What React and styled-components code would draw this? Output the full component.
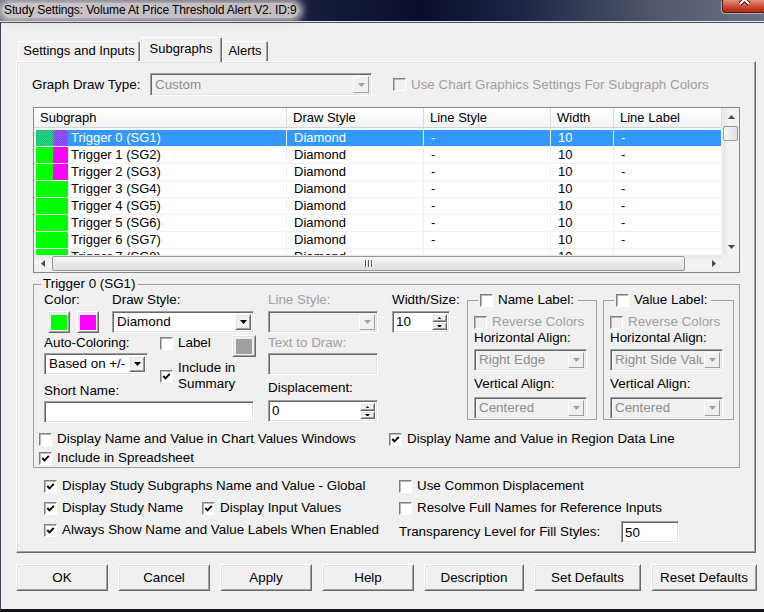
import React from "react";
import styled, { createGlobalStyle, css } from "styled-components";

const GlobalStyle = createGlobalStyle`
  html, body { margin: 0; padding: 0; background: #f0f0f0; }
  body {
    font-family: "Liberation Sans", Arial, sans-serif;
    font-size: 13.4px;
    color: #000;
  }
  * { box-sizing: border-box; }
`;

// classic 3D edges
const raised = css`
  border: 1px solid;
  border-color: #fff #696969 #696969 #fff;
  box-shadow: inset 1px 1px 0 #e3e3e3, inset -1px -1px 0 #a0a0a0;
`;
const sunken = css`
  border: 1px solid;
  border-color: #a0a0a0 #fff #fff #a0a0a0;
  box-shadow: inset 1px 1px 0 #696969, inset -1px -1px 0 #e3e3e3;
`;

const Window = styled.div`
  width: 764px;
  height: 612px;
  overflow: hidden;
  display: flex;
  flex-direction: column;
  background: #f0f0f0;
`;

const TitleBar = styled.div`
  height: 22px;
  flex: none;
  display: flex;
  align-items: flex-start;
  border-bottom: 1px solid #e6e8ee;
  background: linear-gradient(
    90deg,
    #5d6374 0%,
    #3b4058 18%,
    #1b2040 38%,
    #0a0e2c 55%,
    #1e2444 68%,
    #50556c 85%,
    #6c7084 100%
  );
`;

const TitleText = styled.div`
  margin: 3px 0 0 2px;
  padding: 0 2px;
  height: 15px;
  line-height: 15px;
  font-size: 12px;
  letter-spacing: -0.12px;
  white-space: nowrap;
  border-radius: 8px;
  background: rgba(214, 206, 208, 0.9);
  box-shadow: 0 0 7px 4px rgba(214, 206, 208, 0.85);
`;

const CloseButton = styled.div`
  margin-left: auto;
  width: 42px;
  height: 13px;
  border: 1px solid #5a150c;
  border-top: none;
  border-right: none;
  border-radius: 0 0 0 4px;
  box-shadow: -1px 1px 0 rgba(255, 255, 255, 0.45);
  background: linear-gradient(#e2907e, #cd4b33 55%, #a92a17);
  overflow: hidden;
`;

const Frame = styled.div`
  flex: 1;
  border-left: 1px solid #3c3f4e;
  border-top: 1px solid #4a4e60;
  border-bottom: 3px solid #15151c;
  padding: 14px 0 0 15px;
  display: flex;
  flex-direction: column;
  align-items: flex-start;
`;

const TabStrip = styled.div`
  height: 24px;
  display: flex;
  align-items: flex-end;
  padding-left: 2px;
  font-size: 13px;
`;

const Tab = styled.div`
  width: ${(p) => p.$w}px;
  height: ${(p) => (p.$active ? 25 : 20)}px;
  margin-bottom: ${(p) => (p.$active ? -1 : 0)}px;
  position: relative;
  z-index: ${(p) => (p.$active ? 2 : 0)};
  border: 1px solid;
  border-bottom: none;
  border-color: #fff #696969 transparent #fff;
  box-shadow: inset -1px 0 0 #a0a0a0;
  border-radius: 2px 2px 0 0;
  background: #f0f0f0;
  text-align: center;
  line-height: ${(p) => (p.$active ? 21 : 18)}px;
  white-space: nowrap;
`;

const Panel = styled.div`
  width: 740px;
  height: 492px;
  border: 1px solid;
  border-color: #fff #696969 #696969 #fff;
  box-shadow: inset -1px -1px 0 #a0a0a0, inset 1px 1px 0 #e3e3e3;
  padding: 11px 0 0 15px;
  display: flex;
  flex-direction: column;
  align-items: flex-start;
`;

const DrawTypeRow = styled.div`
  display: flex;
  align-items: center;
  height: 23px;
`;

const RowLabel = styled.span`
  width: ${(p) => p.$w}px;
  flex: none;
  white-space: nowrap;
  line-height: 16px;
  color: ${(p) => (p.$disabled ? "#a0a0a0" : "#000")};
`;

/* ---------- basic controls ---------- */

const ComboBox = styled.div`
  ${sunken};
  width: ${(p) => p.$w}px;
  height: ${(p) => p.$h || 22}px;
  flex: none;
  padding: 2px;
  display: flex;
  align-items: center;
  background: ${(p) => (p.$disabled ? "#f0f0f0" : "#fff")};
  color: ${(p) => (p.$disabled ? "#8e8e8e" : "#000")};
`;

const ComboText = styled.span`
  flex: 1;
  min-width: 0;
  padding-left: 2px;
  line-height: 16px;
  white-space: nowrap;
  overflow: hidden;
`;

const DropButton = styled.span`
  ${raised};
  width: 16px;
  flex: none;
  align-self: stretch;
  background: #f0f0f0;
  display: flex;
  align-items: center;
  justify-content: center;
  ${(p) =>
    p.$disabled &&
    css`
      border-color: #fff #a0a0a0 #a0a0a0 #fff;
      box-shadow: none;
    `}
`;

const Tri = ({ dir = "down", color = "#000", size = 7 }) => {
  const pts = {
    down: "0,0 7,0 3.5,4",
    up: "0,4 7,4 3.5,0",
    left: "4,0 4,7 0,3.5",
    right: "0,0 0,7 4,3.5",
  }[dir];
  const vert = dir === "down" || dir === "up";
  const w = vert ? size : (size * 4) / 7;
  const h = vert ? (size * 4) / 7 : size;
  return (
    <svg width={w} height={h} viewBox={vert ? "0 0 7 4" : "0 0 4 7"}>
      <polygon points={pts} fill={color} />
    </svg>
  );
};

const Combo = ({ w, h, disabled, children }) => (
  <ComboBox $w={w} $h={h} $disabled={disabled}>
    <ComboText>{children}</ComboText>
    <DropButton $disabled={disabled}>
      <Tri color={disabled ? "#a0a0a0" : "#000"} />
    </DropButton>
  </ComboBox>
);

const TextBox = styled.div`
  ${sunken};
  width: ${(p) => p.$w}px;
  height: 22px;
  flex: none;
  padding: 0 3px;
  display: flex;
  align-items: center;
  background: ${(p) => (p.$disabled ? "#f0f0f0" : "#fff")};
`;

const SpinBox = styled.div`
  ${sunken};
  width: ${(p) => p.$w}px;
  height: 22px;
  flex: none;
  padding: 2px;
  display: flex;
  background: #fff;
`;

const SpinText = styled.span`
  flex: 1;
  padding-left: 1px;
  line-height: 16px;
`;

const SpinButtons = styled.span`
  width: 15px;
  display: flex;
  flex-direction: column;
`;

const SpinHalf = styled.span`
  ${raised};
  flex: 1;
  background: #f0f0f0;
  display: flex;
  align-items: center;
  justify-content: center;
`;

const Spin = ({ w, value }) => (
  <SpinBox $w={w}>
    <SpinText>{value}</SpinText>
    <SpinButtons>
      <SpinHalf>
        <Tri dir="up" size={5} />
      </SpinHalf>
      <SpinHalf>
        <Tri dir="down" size={5} />
      </SpinHalf>
    </SpinButtons>
  </SpinBox>
);

const CheckItem = styled.div`
  display: flex;
  align-items: center;
  gap: 5px;
  line-height: 16px;
  white-space: nowrap;
  color: ${(p) => (p.$disabled ? "#a0a0a0" : "#000")};
`;

const Box = styled.span`
  width: 13px;
  height: 13px;
  flex: none;
  border: 1px solid;
  border-color: #808080 #fff #fff #808080;
  box-shadow: inset 1px 1px 0 #b8b8b8;
  background: ${(p) => (p.$disabled ? "#f0f0f0" : "#fff")};
  display: flex;
  align-items: center;
  justify-content: center;
`;

const Check = ({ checked, disabled, children }) => (
  <CheckItem $disabled={disabled}>
    <Box $disabled={disabled}>
      {checked && (
        <svg width="9" height="9" viewBox="0 0 9 9">
          <polyline points="1.3,4 3.5,6.3 7.8,1.8" fill="none" stroke="#000" strokeWidth="1.9" />
        </svg>
      )}
    </Box>
    <span>{children}</span>
  </CheckItem>
);

/* ---------- list view ---------- */

const COLS = "253px 137px 127px 63px 108px";

const ListView = styled.div`
  width: 707px;
  height: 166px;
  margin: 11px 0 0 1px;
  border: 1px solid #828790;
  background: #fff;
  font-size: 13px;
  display: grid;
  grid-template-columns: 1fr 17px;
  grid-template-rows: 1fr 17px;
`;

const ListBody = styled.div`
  overflow: hidden;
`;

const HeaderRow = styled.div`
  display: grid;
  grid-template-columns: ${COLS};
  height: 20px;
  border-bottom: 1px solid #d5d5d5;
  background: linear-gradient(#fff, #f1f2f4);
`;

const HeadCell = styled.div`
  padding-left: 6px;
  line-height: 19px;
  border-right: 1px solid #dcdcdc;
  white-space: nowrap;
`;

const Rows = styled.div`
  padding-top: 2px;
`;

const Row = styled.div`
  display: grid;
  grid-template-columns: ${COLS};
  height: 17px;
  border-bottom: 1px solid #f0f0f0;
  color: ${(p) => (p.$sel ? "#fff" : "#000")};
`;

const Cell = styled.div`
  padding-left: 7px;
  line-height: 16px;
  border-right: 1px solid #f0f0f0;
  white-space: nowrap;
  background: ${(p) => (p.$sel ? "#3399ff" : "transparent")};
`;

const NameCell = styled.div`
  display: flex;
  padding-left: 2px;
  border-right: 1px solid #f0f0f0;
  white-space: nowrap;
`;

const NameText = styled.span`
  flex: 1;
  padding-left: 3px;
  line-height: 16px;
  background: ${(p) => (p.$sel ? "#3399ff" : "transparent")};
`;

const Swatch = styled.span`
  width: ${(p) => p.$w}px;
  height: 16px;
  flex: none;
  background: ${(p) =>
    p.$dither
      ? `conic-gradient(${p.$c} 25%, #3399ff 0 50%, ${p.$c} 0 75%, #3399ff 0) 0 0 / 2px 2px`
      : p.$c};
`;

const VScroll = styled.div`
  display: flex;
  flex-direction: column;
  background: linear-gradient(90deg, #e6e6e6, #f4f4f4 40%, #f0f0f0);
  border-left: 1px solid #f0f0f0;
`;

const HScroll = styled.div`
  display: flex;
  background: linear-gradient(#e6e6e6, #f4f4f4 40%, #f0f0f0);
`;

const ScrollArrow = styled.span`
  width: 17px;
  height: 17px;
  flex: none;
  display: flex;
  align-items: center;
  justify-content: center;
`;

const Track = styled.span`
  flex: 1;
`;

const Thumb = styled.span`
  flex: none;
  border: 1px solid #979797;
  border-radius: 2px;
  display: flex;
  align-items: center;
  justify-content: center;
  gap: 2px;
  ${(p) =>
    p.$vertical
      ? css`
          width: 15px;
          height: 15px;
          margin: 1px 0 0 0;
          background: linear-gradient(90deg, #f6f6f6, #e2e2e2);
        `
      : css`
          width: 633px;
          height: 15px;
          margin: 1px 0 0 1px;
          background: linear-gradient(#f6f6f6, #dedede);
        `}
`;

const Grip = styled.span`
  width: 1px;
  height: 7px;
  background: #5a5a5a;
  box-shadow: 1px 0 0 #fff;
`;

const Corner = styled.div`
  background: #f0f0f0;
`;

/* ---------- group boxes ---------- */

const GroupBox = styled.fieldset`
  width: 707px;
  margin: 3px 0 0 1px;
  padding: 0 0 1px 0;
  min-width: 0;
  border: 1px solid #a0a0a0;
`;

const Legend = styled.legend`
  margin-left: ${(p) => p.$ml || 7}px;
  padding: 0 ${(p) => p.$pr || 2}px 0 2px;
  line-height: 16px;
`;

const TopSection = styled.div`
  display: flex;
  align-items: flex-start;
  padding-left: 10px;
`;

const Column = styled.div`
  width: ${(p) => p.$w}px;
  margin-left: ${(p) => p.$ml || 0}px;
  flex: none;
  display: flex;
  flex-direction: column;
  align-items: flex-start;
`;

const Field = styled.div`
  display: flex;
  flex-direction: column;
  align-items: flex-start;
  gap: ${(p) => p.$gap ?? 3}px;
  margin-top: ${(p) => p.$mt || 0}px;
  width: ${(p) => (p.$w ? `${p.$w}px` : "auto")};
`;

const FieldLabel = styled.span`
  line-height: 16px;
  white-space: nowrap;
  color: ${(p) => (p.$disabled ? "#a0a0a0" : "#000")};
`;

const HRow = styled.div`
  display: flex;
  align-items: flex-start;
  margin-top: ${(p) => p.$mt || 0}px;
  height: ${(p) => (p.$h ? `${p.$h}px` : "auto")};
`;

const Swatches = styled.div`
  display: flex;
  gap: 7px;
  margin-left: 4px;
`;

const ColorButton = styled.span`
  ${raised};
  width: ${(p) => p.$w || 22}px;
  height: 22px;
  padding: 2px;
  background: #f0f0f0;
  display: flex;
  align-items: center;
  justify-content: center;
  &::after {
    content: "";
    width: 16px;
    height: 15px;
    background: ${(p) => p.$c};
  }
`;

const LabelColumn = styled.div`
  width: 96px;
  margin-left: 12px;
  display: flex;
  flex-direction: column;
`;

const LabelLine = styled.div`
  display: flex;
  align-items: flex-start;
  height: 22px;
  justify-content: space-between;
`;

const SubGroup = styled.fieldset`
  width: ${(p) => p.$w}px;
  margin: 0 0 0 ${(p) => p.$ml}px;
  padding: 0 6px 0 6px;
  min-width: 0;
  height: 128px;
  border: 1px solid #a0a0a0;
  display: flex;
  flex-direction: column;
  align-items: flex-start;
`;

const ChecksArea = styled.div`
  margin-top: 8px;
  padding-left: 5px;
  display: flex;
  flex-direction: column;
  gap: 3px;
`;

const CheckLine = styled.div`
  display: flex;
`;

const CheckSlot = styled.div`
  width: ${(p) => p.$w}px;
`;

/* ---------- options below the group ---------- */

const Options = styled.div`
  margin-top: 10px;
  padding-left: 12px;
  display: flex;
`;

const OptionCol = styled.div`
  width: ${(p) => (p.$w ? `${p.$w}px` : "auto")};
  display: flex;
  flex-direction: column;
  gap: 6px;
`;

const TransparencyRow = styled.div`
  display: flex;
  align-items: center;
  margin-top: -1px;
`;

const ButtonRow = styled.div`
  margin-top: 11px;
  display: flex;
  gap: 10px;
`;

const Button = styled.div`
  ${raised};
  width: ${(p) => p.$w}px;
  height: 27px;
  background: #f0f0f0;
  display: flex;
  align-items: center;
  justify-content: center;
  white-space: nowrap;
`;

const subgraphs = [0, 1, 2, 3, 4, 5, 6, 7].map((i) => ({
  name: `Trigger ${i} (SG${i + 1})`,
  second: i < 3 ? "#ff00ff" : null,
  sel: i === 0,
}));

const buttons = [
  ["OK", 92],
  ["Cancel", 92],
  ["Apply", 92],
  ["Help", 92],
  ["Description", 100],
  ["Set Defaults", 107],
  ["Reset Defaults", 106],
];

export default function App() {
  return (
    <>
      <GlobalStyle />
      <Window>
        <TitleBar>
          <TitleText>Study Settings: Volume At Price Threshold Alert V2. ID:9</TitleText>
          <CloseButton>
            <svg width="42" height="13" viewBox="0 0 42 13">
              <path d="M17 -5 L26 4 M26 -5 L17 4" stroke="#3a0a05" strokeWidth="4" />
              <path d="M17 -5 L26 4 M26 -5 L17 4" stroke="#fff" strokeWidth="2.2" />
            </svg>
          </CloseButton>
        </TitleBar>

        <Frame>
          <TabStrip>
            <Tab $w={122}>Settings and Inputs</Tab>
            <Tab $w={82} $active>
              Subgraphs
            </Tab>
            <Tab $w={46}>Alerts</Tab>
          </TabStrip>

          <Panel>
            <DrawTypeRow>
              <RowLabel $w={118}>Graph Draw Type:</RowLabel>
              <Combo w={222} h={23} disabled>
                Custom
              </Combo>
              <span style={{ width: 21 }} />
              <Check disabled>Use Chart Graphics Settings For Subgraph Colors</Check>
            </DrawTypeRow>

            <ListView>
              <ListBody>
                <HeaderRow>
                  <HeadCell>Subgraph</HeadCell>
                  <HeadCell>Draw Style</HeadCell>
                  <HeadCell>Line Style</HeadCell>
                  <HeadCell>Width</HeadCell>
                  <HeadCell>Line Label</HeadCell>
                </HeaderRow>
                <Rows>
                  {subgraphs.map((r) => (
                    <Row key={r.name} $sel={r.sel}>
                      <NameCell>
                        {r.second ? (
                          <>
                            <Swatch $w={17} $c="#00ff00" $dither={r.sel} />
                            <Swatch $w={15} $c={r.second} $dither={r.sel} />
                          </>
                        ) : (
                          <Swatch $w={32} $c="#00ff00" />
                        )}
                        <NameText $sel={r.sel}>{r.name}</NameText>
                      </NameCell>
                      <Cell $sel={r.sel}>Diamond</Cell>
                      <Cell $sel={r.sel}>-</Cell>
                      <Cell $sel={r.sel}>10</Cell>
                      <Cell $sel={r.sel}>-</Cell>
                    </Row>
                  ))}
                </Rows>
              </ListBody>
              <VScroll>
                <ScrollArrow>
                  <Tri dir="up" color="#4a4a4a" />
                </ScrollArrow>
                <Thumb $vertical />
                <Track />
                <ScrollArrow>
                  <Tri dir="down" color="#4a4a4a" />
                </ScrollArrow>
              </VScroll>
              <HScroll>
                <ScrollArrow>
                  <Tri dir="left" color="#4a4a4a" />
                </ScrollArrow>
                <Thumb>
                  <Grip />
                  <Grip />
                  <Grip />
                </Thumb>
                <Track />
                <ScrollArrow>
                  <Tri dir="right" color="#4a4a4a" />
                </ScrollArrow>
              </HScroll>
              <Corner />
            </ListView>

            <GroupBox>
              <Legend>Trigger 0 (SG1)</Legend>
              <TopSection>
                <Column $w={210}>
                  <HRow>
                    <Field $w={68}>
                      <FieldLabel>Color:</FieldLabel>
                      <Swatches>
                        <ColorButton $c="#00ff00" />
                        <ColorButton $c="#ff00ff" />
                      </Swatches>
                    </Field>
                    <Field>
                      <FieldLabel>Draw Style:</FieldLabel>
                      <Combo w={142}>Diamond</Combo>
                    </Field>
                  </HRow>
                  <HRow $mt={2} $h={40}>
                    <Field $gap={2} $w={104}>
                      <FieldLabel>Auto-Coloring:</FieldLabel>
                      <Combo w={104}>Based on +/-</Combo>
                    </Field>
                    <LabelColumn>
                      <LabelLine>
                        <Check>Label</Check>
                        <ColorButton $w={24} $c="#a0a0a0" />
                      </LabelLine>
                      <HRow $mt={3}>
                        <Check checked>
                          Include in
                          <br />
                          Summary
                        </Check>
                      </HRow>
                    </LabelColumn>
                  </HRow>
                  <Field $gap={2} $mt={8}>
                    <FieldLabel>Short Name:</FieldLabel>
                    <TextBox $w={210} />
                  </Field>
                </Column>

                <Column $w={110} $ml={14}>
                  <Field>
                    <FieldLabel $disabled>Line Style:</FieldLabel>
                    <Combo w={110} disabled />
                  </Field>
                  <Field $gap={2} $mt={2}>
                    <FieldLabel $disabled>Text to Draw:</FieldLabel>
                    <TextBox $w={110} $disabled />
                  </Field>
                  <Field $gap={4} $mt={5}>
                    <FieldLabel>Displacement:</FieldLabel>
                    <Spin w={110} value="0" />
                  </Field>
                </Column>

                <Column $w={58} $ml={14}>
                  <Field>
                    <FieldLabel>Width/Size:</FieldLabel>
                    <Spin w={58} value="10" />
                  </Field>
                </Column>

                <SubGroup $w={130} $ml={17}>
                  <Legend $ml={4} $pr={4}>
                    <Check>Name Label:</Check>
                  </Legend>
                  <Field $mt={6} $gap={0}>
                    <Check disabled>Reverse Colors</Check>
                    <FieldLabel>Horizontal Align:</FieldLabel>
                  </Field>
                  <Field $mt={3} $gap={5}>
                    <Combo w={113} disabled>
                      Right Edge
                    </Combo>
                    <FieldLabel>Vertical Align:</FieldLabel>
                    <Combo w={113} disabled>
                      Centered
                    </Combo>
                  </Field>
                </SubGroup>

                <SubGroup $w={131} $ml={6}>
                  <Legend $ml={4} $pr={4}>
                    <Check>Value Label:</Check>
                  </Legend>
                  <Field $mt={6} $gap={0}>
                    <Check disabled>Reverse Colors</Check>
                    <FieldLabel>Horizontal Align:</FieldLabel>
                  </Field>
                  <Field $mt={3} $gap={5}>
                    <Combo w={113} disabled>
                      Right Side Value
                    </Combo>
                    <FieldLabel>Vertical Align:</FieldLabel>
                    <Combo w={113} disabled>
                      Centered
                    </Combo>
                  </Field>
                </SubGroup>
              </TopSection>

              <ChecksArea>
                <CheckLine>
                  <CheckSlot $w={350}>
                    <Check>Display Name and Value in Chart Values Windows</Check>
                  </CheckSlot>
                  <Check checked>Display Name and Value in Region Data Line</Check>
                </CheckLine>
                <Check checked>Include in Spreadsheet</Check>
              </ChecksArea>
            </GroupBox>

            <Options>
              <OptionCol $w={355}>
                <Check checked>Display Study Subgraphs Name and Value - Global</Check>
                <CheckLine>
                  <CheckSlot $w={158}>
                    <Check checked>Display Study Name</Check>
                  </CheckSlot>
                  <Check checked>Display Input Values</Check>
                </CheckLine>
                <Check checked>Always Show Name and Value Labels When Enabled</Check>
              </OptionCol>
              <OptionCol>
                <Check>Use Common Displacement</Check>
                <Check>Resolve Full Names for Reference Inputs</Check>
                <TransparencyRow>
                  <RowLabel $w={222}>Transparency Level for Fill Styles:</RowLabel>
                  <TextBox $w={58}>50</TextBox>
                </TransparencyRow>
              </OptionCol>
            </Options>
          </Panel>

          <ButtonRow>
            {buttons.map(([label, w]) => (
              <Button key={label} $w={w}>
                {label}
              </Button>
            ))}
          </ButtonRow>
        </Frame>
      </Window>
    </>
  );
}
